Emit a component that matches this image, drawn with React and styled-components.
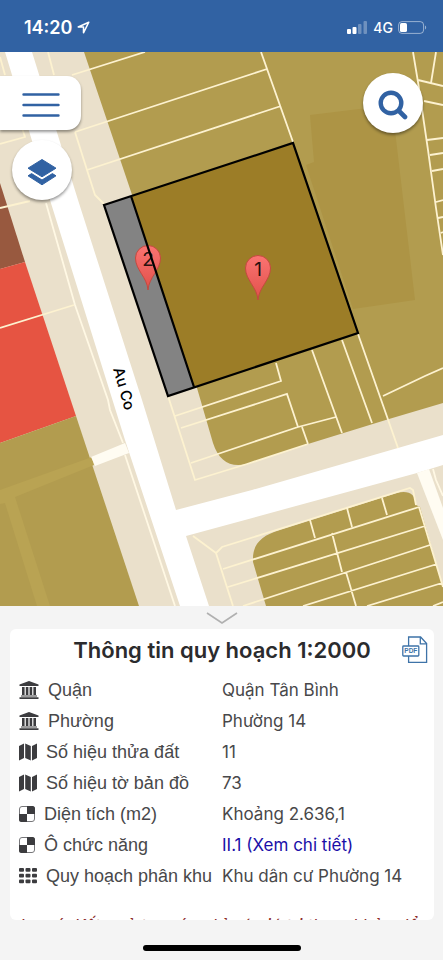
import React from 'react';
import styled, { createGlobalStyle } from 'styled-components';

const GlobalStyle = createGlobalStyle`
  * {
    box-sizing: border-box;
  }

  body {
    margin: 0;
    background: #f4f4f4;
    font-family: Inter, "Liberation Sans", sans-serif;
  }
`

const Page = styled.div`
  display: flex;
  flex-direction: column;
  min-height: 100vh;
`

const StatusBar = styled.header`
  display: flex;
  justify-content: space-between;
  align-items: center;
  height: 52px;
  padding: 3px 16px 0 24px;
  background: #3162a3;
  color: white;
`

const StatusGroup = styled.div`
  display: flex;
  align-items: center;
  gap: 5px;
`

const Clock = styled.span`
  font-size: 18px;
  font-weight: 600;
`

const Network = styled.span`
  font-size: 14px;
  font-weight: 500;
`

const MapArea = styled.main`
  position: relative;
  flex: 1;
  min-height: 400px;
  overflow: hidden;
  background: #eae0cb;
`

const MapSvg = styled.svg`
  position: absolute;
  inset: 0;
  width: 100%;
  height: 100%;
`

const Controls = styled.div`
  position: absolute;
  top: 21px;
  left: 0;
  right: 20px;
  display: flex;
  justify-content: space-between;
  align-items: flex-start;
`

const ControlColumn = styled.div`
  display: flex;
  flex-direction: column;
  gap: 10px;
  padding-top: 3px;
`

const MapButton = styled.button`
  display: flex;
  justify-content: center;
  align-items: center;
  padding: 4px 0 0;
  border: none;
  background: white;
  color: #3162a3;
  box-shadow: 0 2px 3px rgba(0, 0, 0, 0.4);
  cursor: pointer;
`

const MenuButton = styled(MapButton)`
  width: 81px;
  height: 54px;
  border-radius: 0 14px 14px 0;
`

const RoundButton = styled(MapButton)`
  width: 60px;
  height: 60px;
  margin-left: ${(props) => props.$indent || 0};
  border-radius: 50%;
`

const Sheet = styled.section`
  display: flex;
  flex-direction: column;
  align-items: center;
  padding: 0 9px 9px 10px;
  background: #f4f4f4;
`

const CollapseButton = styled.button`
  display: flex;
  justify-content: center;
  align-items: center;
  width: 60px;
  height: 23px;
  padding: 0;
  border: none;
  background: none;
  cursor: pointer;
`

const Card = styled.div`
  width: 100%;
  border-radius: 6px;
  background: white;
  overflow: hidden;
`

const CardHeader = styled.div`
  display: grid;
  grid-template-columns: 32px 1fr 32px;
  align-items: center;
  height: 45px;
  padding-bottom: 3px;
`

const Title = styled.h1`
  grid-column: 2;
  margin: 0;
  font-size: 22px;
  font-weight: 600;
  line-height: 32px;
  text-align: center;
  white-space: nowrap;
  color: #2b2b2d;
`

const PdfButton = styled.button`
  display: flex;
  width: 26px;
  padding: 0;
  border: none;
  background: none;
  cursor: pointer;
`

const InfoTable = styled.table`
  width: 100%;
  table-layout: fixed;
  border-collapse: collapse;
  color: #48484a;
`

const LabelCell = styled.th`
  width: 50%;
  height: 31px;
  padding: 0 0 0 9px;
  font-family: "Liberation Sans", sans-serif;
  font-size: 18px;
  font-weight: 400;
  text-align: left;
  white-space: nowrap;
`

const Label = styled.span`
  display: flex;
  align-items: center;
  gap: 9px;
  line-height: 24px;

  svg {
    flex: none;
    color: #3c3c3f;
  }
`

const ValueCell = styled.td`
  padding: 0;
  font-size: 17px;
  line-height: 24px;
  white-space: nowrap;
`

const DetailLink = styled.a`
  color: #1a0fa8;
  text-decoration: none;
`

const NoteScroll = styled.div`
  height: 29px;
  padding: 23px 9px 0 10px;
  overflow: hidden;
`

const Note = styled.p`
  margin: 0;
  font-size: 17px;
  font-style: italic;
  line-height: 24px;
  white-space: nowrap;
  color: #8c2a2a;
`

const HomeIndicator = styled.div`
  width: 158px;
  height: 6px;
  margin-top: 25px;
  border-radius: 3px;
  background: black;
`

const LocationArrow = () => (
    <svg width="13" height="13" viewBox="0 0 13 13" fill="none" stroke="white" strokeWidth="1.5" strokeLinejoin="round">
        <path d="M11.8 1.2 1.2 6h5.3v5.8z" />
    </svg>
);

const Signal = () => (
    <svg width="21" height="13" viewBox="0 0 21 13" fill="white">
        <rect x="0" y="8" width="4" height="5" rx="1" />
        <rect x="5.5" y="6" width="4" height="7" rx="1" />
        <rect x="11" y="3" width="3.5" height="10" rx="1" opacity="0.3" />
        <rect x="16.5" y="0" width="3.5" height="13" rx="1" opacity="0.3" />
    </svg>
);

const Battery = () => (
    <svg width="29" height="13" viewBox="0 0 29 13">
        <rect x="0.6" y="0.6" width="25" height="11.8" rx="3.4" fill="none" stroke="white" strokeOpacity="0.5" />
        <rect x="2" y="2" width="7" height="9" rx="1.6" fill="white" />
        <path d="M27 4.5c1.6.6 1.6 3.4 0 4z" fill="white" opacity="0.5" />
    </svg>
);

const MenuIcon = () => (
    <svg width="38" height="24" viewBox="0 0 38 24" stroke="currentColor" strokeWidth="2.4" strokeLinecap="round">
        <path d="M1.5 1.5h35M1.5 12h35M1.5 22.5h35" />
    </svg>
);

const LayersIcon = () => (
    <svg width="30" height="28" viewBox="0 0 30 28" fill="currentColor" stroke="currentColor" strokeLinejoin="round">
        <path d="M15 1.5 29 10.2 15 18.8 1 10.2z" />
        <path d="M1 17.8 4.6 15.6l10.400 6.400 10.400-6.400 3.600 2.200-14 9z" />
    </svg>
);

const SearchIcon = () => (
    <svg width="30" height="30" viewBox="0 0 30 30" fill="none" stroke="currentColor" strokeLinecap="round">
        <circle cx="13" cy="13" r="10.3" strokeWidth="4.4" />
        <path d="m21 21 6 6" strokeWidth="4.6" />
    </svg>
);

const PdfIcon = () => (
    <svg width="26" height="28" viewBox="0 0 26 28" fill="none" stroke="#3e73a8" strokeWidth="1.3">
        <path d="M6.6 10V1h12l6 6.5v18.8h-18V20" />
        <path d="M18.3 1v6.8h6.3" />
        <rect x="0.8" y="10" width="16" height="10" rx="0.8" fill="white" />
        <text x="8.8" y="17.4" textAnchor="middle" fontSize="6.5" fontWeight="700" fill="#3e73a8" stroke="none">PDF</text>
    </svg>
);

const BankIcon = () => (
    <svg width="20" height="18" viewBox="0 0 20 18" fill="currentColor">
        <path d="M10 0 19.5 3.6V5H.5V3.600z" />
        <path d="M3 6h2.600v8H3zM6.800 6h2.600v8H6.800zM10.600 6h2.600v8h-2.600zM14.400 6H17v8h-2.600z" />
        <path d="M2 14.600h16v1H2zM.5 16.200h19V18H.5z" />
    </svg>
);

const PlotIcon = () => (
    <svg width="18" height="18" viewBox="0 0 18 18" fill="currentColor">
        <path d="M0 3 5 .5v14.500L0 17.500zM6.200.5l5.600 2.500v14.500L6.200 15zM13 3l5-2.500V15l-5 2.500z" />
    </svg>
);

const CheckerIcon = () => (
    <svg width="16" height="16" viewBox="0 0 16 16">
        <rect x="0.5" y="0.5" width="15" height="15" rx="2.5" fill="white" stroke="#77777a" />
        <path d="M8 0h5.5A2.5 2.5 0 0 1 16 2.5V8H8zM0 8h8v8H2.5A2.5 2.5 0 0 1 0 13.5z" fill="currentColor" />
    </svg>
);

const GridIcon = () => (
    <svg width="18" height="16" viewBox="0 0 18 16" fill="currentColor">
        {[0, 5.7, 11.4].map((y) => [0, 6.5, 13].map((x) => (
            <rect key={`${x}-${y}`} x={x} y={y} width="5" height="3.8" rx="1" />
        )))}
    </svg>
);

const PARCEL_LINES = [
    'M0 57 5 75M0 144 25 137 22 128M0 208 30 201M0 328 74 305',
    'M48 52 54 75M72 75 145 52M75 132 267 69M87 170 281 106M261 52 293 142',
    'M75 132 87 170 95 195 104 204',
    'M413 52 418 82 428 150 436 208 443 255M436 52 431 83M418 80 443 86M424 101 443 105',
    'M427 140 443 138M430 155 443 153M432 171 443 169M436 202 443 200M438 218 443 217M441 233 443 232',
    'M276 363 281 381 175 416M181 428 287 394 298 427 336 417M191 463 298 427M302 427 308 444',
    'M312 350 342 433M342 340 372 423M358 334 398 448M383 396 425 376 443 368',
    'M168 396 195 480 247 464 308 444',
    'M233 606 216 553 222 547 308 520 410 488 413 490 416 505M193 536 216 553',
    'M223 569 419 507M228 587 425 526M243 606 430 545M303 606 437 564M367 606 442 583M433 606 443 602',
    'M310 520 315 538M347 508 352 527M382 498 387 515M332 533 342 572M346 572 356 606M419 507 443 587',
];

const Pin = ({ x, y, label }) => (
    <g>
        <path
            d={`M${x} ${y + 32}C${x - 1} ${y + 19} ${x - 12.5} ${y + 12} ${x - 12.5} ${y}a12.5 12.5 0 0 1 25 0C${x + 12.5} ${y + 12} ${x + 1} ${y + 19} ${x} ${y + 32}z`}
            fill="url(#pin)"
            stroke="#c4493f"
        />
        <text x={x} y={y + 8} textAnchor="middle" fontSize="19" fill="#2a1210">{label}</text>
    </g>
);

const ZoningMap = () => (
    <MapSvg viewBox="0 52 443 554" preserveAspectRatio="xMidYMid slice" role="img" aria-label="Bản đồ quy hoạch">
        <defs>
            <linearGradient id="pin" x1="0" y1="0" x2="0" y2="1">
                <stop offset="0" stopColor="#fb7472" />
                <stop offset="1" stopColor="#e0504a" />
            </linearGradient>
        </defs>

        {/* zones */}
        <path d="M0 183 7 205 25 262 0 269z" fill="#98593f" />
        <path d="M0 269 25 262 76 416 0 443z" fill="#e65442" />
        <path d="M0 443 76 416 139 606H0z" fill="#b29c4f" />
        <path d="M0 490 92 457 94 465 15 497 50 606H37L5 503 0 504z" fill="#b9a353" />
        <path d="M84 52H443V403L389 419 308 444 247 464C230 468 219 461 213 443L197 388z" fill="#b29c4f" />
        <path d="M310 115 392 105 415 300 353 309 306 165 314 162z" fill="#ad9445" />
        <path d="M266 606 253 562C252 545 260 536 280 530L397 493C408 490 416 494 416 505L420 507 443 587V606z" fill="#b29c4f" />

        {/* streets */}
        <path d="M5 52H32L78 200 142 400 176 510 252 490 443 435V465L417 473 186 536 209 606H180L125 440 50 200z" fill="white" />
        <path d="M91 457 125 443 129 453 95 466z" fill="#fffcf2" />
        <path d="M417 473 429 469 443 508V540z" fill="#fffcf2" />
        <path d="M46 203 75 305 99 374 108 400 110 410 123 443M125 455 175 606M433 469 436 480 443 496" fill="none" stroke="#fff8e4" strokeWidth="1.8" />

        <path d={PARCEL_LINES.join('')} fill="none" stroke="#fdf2d0" strokeWidth="1.8" />

        {/* selected parcel */}
        <path d="M131 196 293 143 358 333 194 387z" fill="#9c7d27" />
        <path d="M104 205 131 196 194 387 168 396z" fill="#838383" />
        <Pin x={258} y={268} label="1" />
        <Pin x={148} y={258} label="2" />
        <path d="M104 205 293 143 358 333 168 396zM131 196 194 387" fill="none" stroke="black" strokeWidth="2.2" />

        <text transform="translate(113 369) rotate(74)" fontSize="15" fontWeight="500" fill="black">Au Co</text>
    </MapSvg>
);

const rows = [
    { icon: BankIcon, label: 'Quận', value: 'Quận Tân Bình' },
    { icon: BankIcon, label: 'Phường', value: 'Phường 14' },
    { icon: PlotIcon, label: 'Số hiệu thửa đất', value: '11' },
    { icon: PlotIcon, label: 'Số hiệu tờ bản đồ', value: '73' },
    { icon: CheckerIcon, label: 'Diện tích (m2)', value: 'Khoảng 2.636,1' },
    { icon: CheckerIcon, label: 'Ô chức năng', value: 'II.1 (Xem chi tiết)', link: true },
    { icon: GridIcon, label: 'Quy hoạch phân khu', value: 'Khu dân cư Phường 14' },
];

const App = () => {
    return (
        <>
            <GlobalStyle />
            <Page>
                <StatusBar>
                    <StatusGroup>
                        <Clock>14:20</Clock>
                        <LocationArrow />
                    </StatusGroup>
                    <StatusGroup>
                        <Signal />
                        <Network>4G</Network>
                        <Battery />
                    </StatusGroup>
                </StatusBar>

                <MapArea>
                    <ZoningMap />
                    <Controls>
                        <ControlColumn>
                            <MenuButton type="button" aria-label="Menu">
                                <MenuIcon />
                            </MenuButton>
                            <RoundButton type="button" aria-label="Lớp bản đồ" $indent="12px">
                                <LayersIcon />
                            </RoundButton>
                        </ControlColumn>
                        <RoundButton type="button" aria-label="Tìm kiếm">
                            <SearchIcon />
                        </RoundButton>
                    </Controls>
                </MapArea>

                <Sheet>
                    <CollapseButton type="button" aria-label="Thu gọn">
                        <svg width="32" height="12" viewBox="0 0 32 12" fill="none" stroke="#b0b0b0" strokeWidth="1.6">
                            <path d="M1 1 16 11 31 1" />
                        </svg>
                    </CollapseButton>
                    <Card>
                        <CardHeader>
                            <Title>Thông tin quy hoạch 1:2000</Title>
                            <PdfButton type="button" aria-label="Tải PDF">
                                <PdfIcon />
                            </PdfButton>
                        </CardHeader>
                        <InfoTable>
                            <tbody>
                                {rows.map(({ icon: Icon, label, value, link }) => (
                                    <tr key={label}>
                                        <LabelCell scope="row">
                                            <Label>
                                                <Icon />
                                                {label}
                                            </Label>
                                        </LabelCell>
                                        <ValueCell>
                                            {link ? <DetailLink href="#chi-tiet">{value}</DetailLink> : value}
                                        </ValueCell>
                                    </tr>
                                ))}
                            </tbody>
                        </InfoTable>
                        <NoteScroll>
                            <Note>Lưu ý: Kết quả tra cứu chỉ có giá trị tham khảo để</Note>
                        </NoteScroll>
                    </Card>
                    <HomeIndicator />
                </Sheet>
            </Page>
        </>
    );
};

export default App;
